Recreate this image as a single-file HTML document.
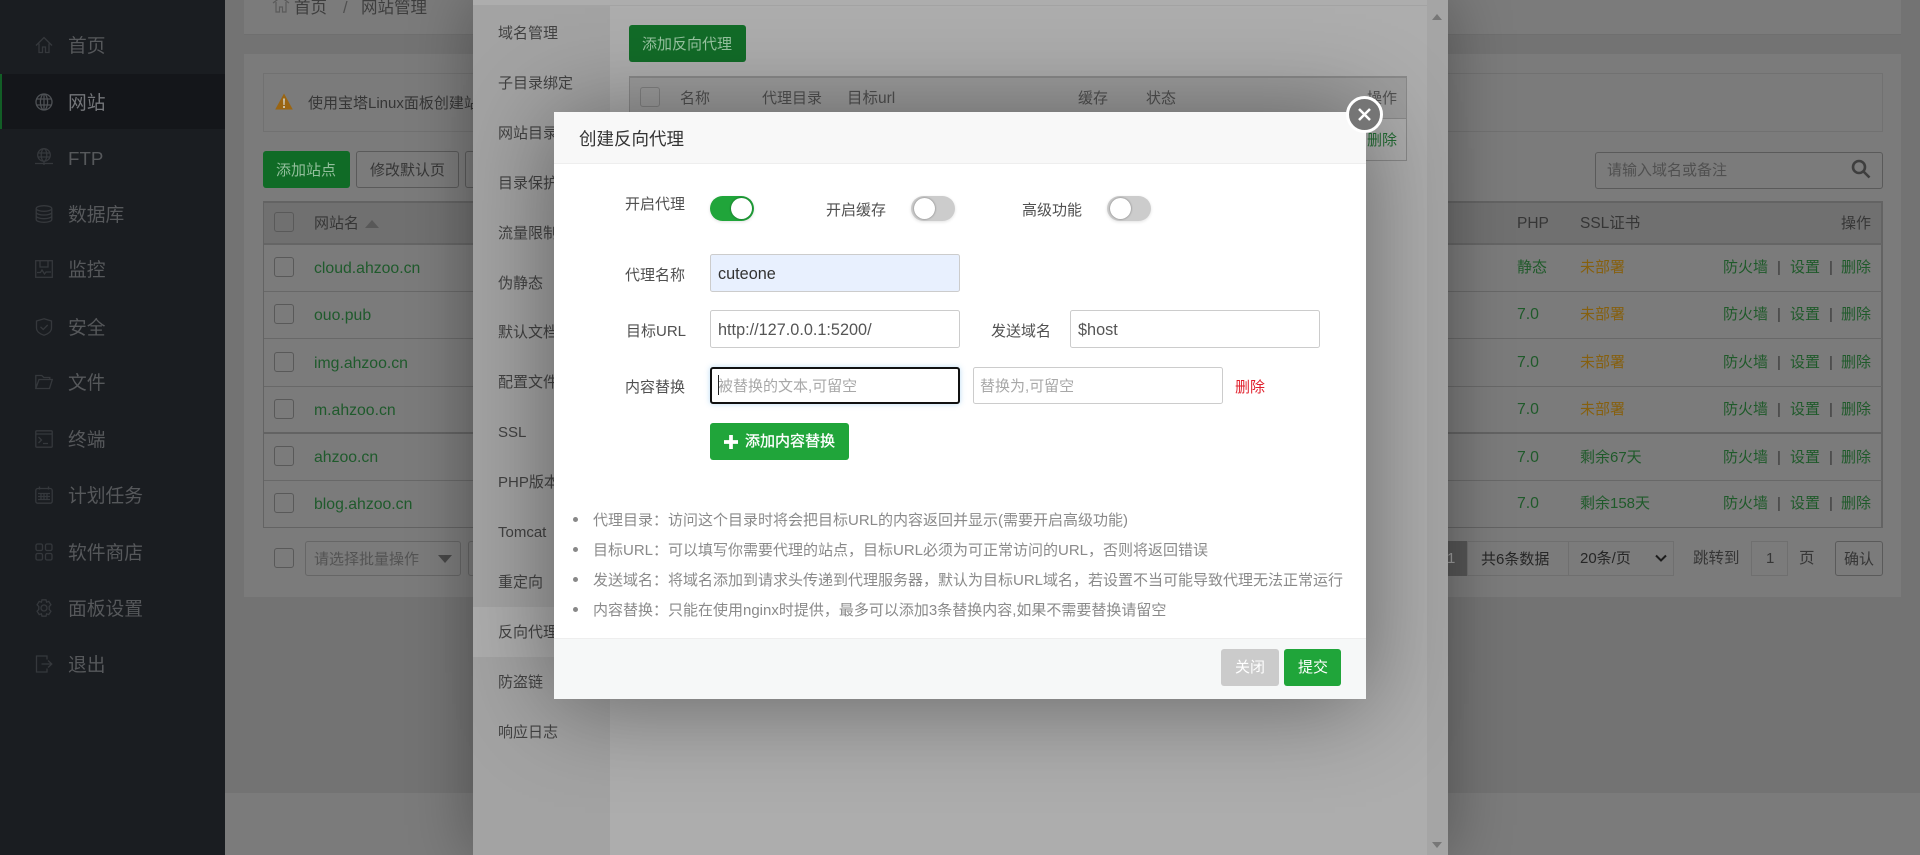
<!DOCTYPE html>
<html lang="zh-CN">
<head>
<meta charset="utf-8">
<title>网站管理</title>
<style>
html,body{margin:0;padding:0;width:1920px;height:855px;overflow:hidden;background:#737373}
body{position:relative;font-family:"Liberation Sans","Noto Sans CJK SC",sans-serif;font-size:15px;color:#363636}
div,span,svg{box-sizing:border-box}
.a{position:absolute}
.t{position:absolute;white-space:nowrap;line-height:20px;height:20px;margin-top:1px}
.m{position:absolute;left:68px;font-size:18.75px;line-height:24px;height:24px;color:#56585b;white-space:nowrap;margin-top:1px}
.i{position:absolute;left:35px;width:18px;height:18px;fill:none;stroke:#35383c;stroke-width:1.3}
.cb{position:absolute;width:20px;height:20px;border:1px solid #595959;border-radius:3px}
.n{color:#1f5a2c;font-size:15.8px}
.g{color:#1f5a2a}
.o{color:#86600f}
.tab{position:absolute;left:498px;color:#424242;white-space:nowrap;line-height:20px;margin-top:1px}
.lb{position:absolute;color:#505050;white-space:nowrap;line-height:20px;height:20px;margin-top:1px}
.inp{position:absolute;height:38px;border:1px solid #ccc;border-radius:2.5px;background:#fff;color:#555;font-size:16.25px;line-height:38px;padding-left:7px;white-space:nowrap}
.tip{position:absolute;left:593px;color:#8a8a8a;line-height:20px;height:20px;white-space:nowrap;margin-top:1px}
.dot{position:absolute;left:573px;width:5px;height:5px;border-radius:50%;background:#888}
.tog{position:absolute;width:44px;height:25px;border-radius:13px;background:#ccc;box-shadow:0 1px 3px rgba(0,0,0,.12)}
.tog i{position:absolute;top:2px;left:3px;width:21px;height:21px;border-radius:50%;background:#fff;box-shadow:0 0 2px rgba(0,0,0,.45)}
</style>
</head>
<body>

<!-- sidebar -->
<div class="a" style="left:0;top:0;width:225px;height:855px;background:#1a1d21"></div>
<div class="a" style="left:0;top:74px;width:225px;height:55px;background:#14161a"></div>
<div class="a" style="left:0;top:74px;width:2px;height:55px;background:#125e26"></div>

<svg class="i" style="top:36px" viewBox="0 0 18 18"><path d="M1 9.500 9 1.500l8 8M4 7.500V16.500h3.500V11h3v5.500H14V7.500"/></svg>
<div class="m" style="top:33px">首页</div>
<svg class="i" style="top:93px;stroke:#4e5155" viewBox="0 0 18 18"><circle cx="9" cy="9" r="8"/><ellipse cx="9" cy="9" rx="3.600" ry="8"/><path d="M1 6h16M1 12h16M9 1v16"/></svg>
<div class="m" style="top:90px;color:#74767a">网站</div>
<svg class="i" style="top:148px" viewBox="0 0 18 18"><circle cx="9" cy="7" r="6.300"/><ellipse cx="9" cy="7" rx="2.800" ry="6.300"/><path d="M2.700 5h12.600M2.700 9h12.600M0 15.500h18M9 13v4"/></svg>
<div class="t" style="left:68px;top:146px;height:24px;line-height:24px;font-size:18.75px;color:#56585b">FTP</div>
<svg class="i" style="top:205px" viewBox="0 0 18 18"><ellipse cx="9" cy="3.500" rx="7.800" ry="2.800"/><path d="M1.200 3.500v11c0 1.600 3.500 2.800 7.800 2.800s7.800-1.200 7.800-2.800v-11M1.200 7.200c0 1.600 3.500 2.800 7.800 2.800s7.800-1.200 7.800-2.800M1.200 10.900c0 1.600 3.500 2.800 7.800 2.800s7.800-1.200 7.800-2.800"/></svg>
<div class="m" style="top:202px">数据库</div>
<svg class="i" style="top:260px" viewBox="0 0 18 18"><rect x=".7" y=".7" width="16.600" height="16.600"/><path d="M5 1v6h8V1M2 12.500h3.500l1.500-2.500 2.500 4 1.500-2h5"/></svg>
<div class="m" style="top:257px">监控</div>
<svg class="i" style="top:318px" viewBox="0 0 18 18"><path d="M9 .8 16.500 3v7c0 3.500-3.500 6-7.500 7.200C5 16 1.500 13.500 1.500 10V3z"/><path d="m5.500 8.800 2.700 2.700 4.500-4.500"/></svg>
<div class="m" style="top:315px">安全</div>
<svg class="i" style="top:373px" viewBox="0 0 18 18"><path d="M.8 15.500V2.500h6l2 2h6v2M.8 15.500h13.700l2.800-9H4z"/></svg>
<div class="m" style="top:370px">文件</div>
<svg class="i" style="top:430px" viewBox="0 0 18 18"><rect x=".8" y=".8" width="16.400" height="16.400" rx="1"/><path d="M1 4h16M3.500 7l3 3-3 3M8 13.500h5"/></svg>
<div class="m" style="top:427px">终端</div>
<svg class="i" style="top:486px" viewBox="0 0 18 18"><rect x=".8" y="2.500" width="16.400" height="14.700" rx="2"/><path d="M4.500.5v3M13.500.5v3M3 7.500h12M3 10.500h12M3 13.500h12M6 7.500v6M9 7.500v6M12 7.500v6"/></svg>
<div class="m" style="top:483px">计划任务</div>
<svg class="i" style="top:543px" viewBox="0 0 18 18"><rect x="1" y="1" width="6.500" height="6.500" rx="1.500"/><rect x="10.500" y="1" width="6.500" height="6.500" rx="1.500"/><rect x="1" y="10.500" width="6.500" height="6.500" rx="1.500"/><rect x="10.500" y="10.500" width="6.500" height="6.500" rx="1.500"/></svg>
<div class="m" style="top:540px">软件商店</div>
<svg class="i" style="top:599px" viewBox="0 0 18 18"><path d="M7 .8h4l.6 2.400 2.200-.8 2.100 3.400-1.700 1.700v3l1.700 1.700-2.100 3.400-2.200-.8-.6 2.400H7l-.6-2.400-2.200.8-2.100-3.400 1.700-1.700v-3L2.100 5.800l2.100-3.400 2.200.8z"/><circle cx="9" cy="9" r="3"/></svg>
<div class="m" style="top:596px">面板设置</div>
<svg class="i" style="top:655px" viewBox="0 0 18 18"><path d="M12 4.500V1H1.500v16H12v-3.500M6.500 9H16M13 5.500 16.800 9 13 12.500"/></svg>
<div class="m" style="top:652px">退出</div>

<!-- page -->
<div class="a" style="left:225px;top:793px;width:1695px;height:62px;background:#7b7b7b"></div>
<div class="a" style="left:244px;top:0;width:1657px;height:35px;background:#7b7b7b;border-bottom:1px solid #6f6f6f"></div>
<svg class="a" style="left:272px;top:0;width:18px;height:14px;fill:none;stroke:#5a5a5a;stroke-width:1.200" viewBox="0 0 18 14"><path d="M1 3 9-3l8 6M4 2v10h3.500V7h3v5H14V2"/></svg>
<div class="t" style="left:294px;top:-3px;font-size:16.500px;color:#3e3e3e">首页</div>
<div class="t" style="left:343px;top:-3px;font-size:16.500px;color:#505050">/</div>
<div class="t" style="left:361px;top:-3px;font-size:16.500px;color:#3e3e3e">网站管理</div>

<div class="a" style="left:244px;top:54px;width:1657px;height:543px;background:#7b7b7b"></div>

<div class="a" style="left:263px;top:73px;width:1620px;height:59px;border:1px solid #717171"></div>
<svg class="a" style="left:275px;top:93px;width:18px;height:17px" viewBox="0 0 18 17"><path d="M9 .5 17.800 16.500H.2z" fill="#9a6512"/><path d="M8 5.500h2l-.3 6.500H8.300zM8 13h2v2H8z" fill="#c8bfa8"/></svg>
<div class="t" style="left:308px;top:93px">使用宝塔Linux面板创建站点时会自动创建权限配置，统一使用www用户</div>

<div class="a" style="left:263px;top:151px;width:87px;height:37px;background:#106b26;border-radius:3px"></div>
<div class="t" style="left:276px;top:160px;color:#93bf9c">添加站点</div>
<div class="a" style="left:356px;top:151px;width:103px;height:37px;border:1px solid #5a5a5a;border-radius:3px"></div>
<div class="t" style="left:370px;top:160px">修改默认页</div>
<div class="a" style="left:465px;top:151px;width:60px;height:37px;border:1px solid #5a5a5a;border-radius:3px"></div>

<div class="a" style="left:1595px;top:152px;width:288px;height:37px;border:1px solid #5a5a5a;border-radius:3px"></div>
<div class="t" style="left:1607px;top:160px;color:#505050">请输入域名或备注</div>
<svg class="a" style="left:1851px;top:159px;width:20px;height:20px;fill:none;stroke:#3e3e3e;stroke-width:2.600" viewBox="0 0 20 20"><circle cx="8" cy="8" r="6"/><path d="m12.500 12.500 6 6"/></svg>

<!-- main table -->
<div class="a" style="left:263px;top:201px;width:1620px;height:327px;border:1px solid #636363;border-top-width:2px;border-right-width:2px"></div>
<div class="a" style="left:264px;top:203px;width:1617px;height:40px;background:#707070"></div>
<div class="a" style="left:264px;top:243px;width:1618px;height:2px;background:#656565"></div>
<div class="a" style="left:264px;top:291px;width:1618px;height:1px;background:#686868"></div>
<div class="a" style="left:264px;top:338px;width:1618px;height:1px;background:#686868"></div>
<div class="a" style="left:264px;top:386px;width:1618px;height:1px;background:#686868"></div>
<div class="a" style="left:264px;top:432px;width:1618px;height:2px;background:#636363"></div>
<div class="a" style="left:264px;top:480px;width:1618px;height:1px;background:#686868"></div>

<div class="cb" style="left:274px;top:212px"></div>
<div class="t" style="left:314px;top:213px">网站名</div>
<svg class="a" style="left:365px;top:220px;width:14px;height:8px" viewBox="0 0 14 8"><path d="M7 0 14 8H0z" fill="#585858"/></svg>
<div class="t" style="left:1517px;top:213px;font-size:15.500px">PHP</div>
<div class="t" style="left:1580px;top:213px;font-size:15.500px">SSL证书</div>
<div class="t" style="left:1841px;top:213px">操作</div>

<div class="cb" style="left:274px;top:257px"></div><div class="t n" style="left:314px;top:258px">cloud.ahzoo.cn</div>
<div class="cb" style="left:274px;top:304px"></div><div class="t n" style="left:314px;top:305px">ouo.pub</div>
<div class="cb" style="left:274px;top:352px"></div><div class="t n" style="left:314px;top:353px">img.ahzoo.cn</div>
<div class="cb" style="left:274px;top:399px"></div><div class="t n" style="left:314px;top:400px">m.ahzoo.cn</div>
<div class="cb" style="left:274px;top:446px"></div><div class="t n" style="left:314px;top:447px">ahzoo.cn</div>
<div class="cb" style="left:274px;top:493px"></div><div class="t n" style="left:314px;top:494px">blog.ahzoo.cn</div>

<div class="t g" style="left:1517px;top:257px">静态</div><div class="t o" style="left:1580px;top:257px">未部署</div>
<div class="t g" style="left:1517px;top:304px;font-size:15.800px">7.0</div><div class="t o" style="left:1580px;top:304px">未部署</div>
<div class="t g" style="left:1517px;top:352px;font-size:15.800px">7.0</div><div class="t o" style="left:1580px;top:352px">未部署</div>
<div class="t g" style="left:1517px;top:399px;font-size:15.800px">7.0</div><div class="t o" style="left:1580px;top:399px">未部署</div>
<div class="t g" style="left:1517px;top:447px;font-size:15.800px">7.0</div><div class="t g" style="left:1580px;top:447px">剩余67天</div>
<div class="t g" style="left:1517px;top:493px;font-size:15.800px">7.0</div><div class="t g" style="left:1580px;top:493px">剩余158天</div>

<div class="t g" style="left:1723px;top:257px">防火墙</div><div class="t" style="left:1777px;top:257px">|</div><div class="t g" style="left:1790px;top:257px">设置</div><div class="t" style="left:1829px;top:257px">|</div><div class="t g" style="left:1841px;top:257px">删除</div>
<div class="t g" style="left:1723px;top:304px">防火墙</div><div class="t" style="left:1777px;top:304px">|</div><div class="t g" style="left:1790px;top:304px">设置</div><div class="t" style="left:1829px;top:304px">|</div><div class="t g" style="left:1841px;top:304px">删除</div>
<div class="t g" style="left:1723px;top:352px">防火墙</div><div class="t" style="left:1777px;top:352px">|</div><div class="t g" style="left:1790px;top:352px">设置</div><div class="t" style="left:1829px;top:352px">|</div><div class="t g" style="left:1841px;top:352px">删除</div>
<div class="t g" style="left:1723px;top:399px">防火墙</div><div class="t" style="left:1777px;top:399px">|</div><div class="t g" style="left:1790px;top:399px">设置</div><div class="t" style="left:1829px;top:399px">|</div><div class="t g" style="left:1841px;top:399px">删除</div>
<div class="t g" style="left:1723px;top:447px">防火墙</div><div class="t" style="left:1777px;top:447px">|</div><div class="t g" style="left:1790px;top:447px">设置</div><div class="t" style="left:1829px;top:447px">|</div><div class="t g" style="left:1841px;top:447px">删除</div>
<div class="t g" style="left:1723px;top:493px">防火墙</div><div class="t" style="left:1777px;top:493px">|</div><div class="t g" style="left:1790px;top:493px">设置</div><div class="t" style="left:1829px;top:493px">|</div><div class="t g" style="left:1841px;top:493px">删除</div>

<!-- batch row -->
<div class="cb" style="left:274px;top:548px"></div>
<div class="a" style="left:305px;top:541px;width:156px;height:35px;border:1px solid #666;border-radius:3px"></div>
<div class="t" style="left:314px;top:549px;color:#535353">请选择批量操作</div>
<svg class="a" style="left:438px;top:555px;width:14px;height:8px" viewBox="0 0 14 8"><path d="M0 0h14L7 8z" fill="#474747"/></svg>
<div class="a" style="left:468px;top:541px;width:60px;height:35px;border:1px solid #666;border-radius:3px"></div>

<!-- pagination -->
<div class="a" style="left:1420px;top:541px;width:47px;height:35px;background:#565656"></div>
<div class="a" style="left:1467px;top:541px;width:207px;height:35px;border:1px solid #6f6f6f"></div>
<div class="a" style="left:1568px;top:541px;width:1px;height:35px;background:#6f6f6f"></div>
<div class="t" style="left:1481px;top:549px;color:#262626">共6条数据</div>
<div class="t" style="left:1580px;top:548px;color:#262626">20条/页</div>
<svg class="a" style="left:1655px;top:554px;width:12px;height:9px;fill:none;stroke:#1d1d1d;stroke-width:2" viewBox="0 0 12 9"><path d="m1 1.500 5 5 5-5"/></svg>
<div class="t" style="left:1693px;top:548px;font-size:15.500px">跳转到</div>
<div class="a" style="left:1751px;top:541px;width:37px;height:35px;border:1px solid #6f6f6f"></div>
<div class="t" style="left:1766px;top:548px">1</div>
<div class="t" style="left:1799px;top:548px;font-size:15.500px">页</div>
<div class="a" style="left:1835px;top:541px;width:48px;height:35px;border:1px solid #5a5a5a;border-radius:3px"></div>
<div class="t" style="left:1844px;top:549px">确认</div>

<!-- drawer -->
<div class="a" style="left:473px;top:0;width:975px;height:855px;background:#adadad;box-shadow:0 0 60px rgba(0,0,0,.32)"></div>
<div class="t" style="left:1447px;top:548px;color:#868686">1</div>
<div class="a" style="left:473px;top:6px;width:137px;height:849px;background:#a3a3a3"></div>
<div class="a" style="left:473px;top:5px;width:954px;height:1px;background:#a3a3a3"></div>
<div class="a" style="left:473px;top:607px;width:137px;height:50px;background:#adadad"></div>
<div class="a" style="left:1427px;top:0;width:21px;height:855px;background:#a5a5a5"></div>
<svg class="a" style="left:1432px;top:14px;width:10px;height:6px" viewBox="0 0 10 6"><path d="M5 0 10 6H0z" fill="#777"/></svg>
<svg class="a" style="left:1432px;top:842px;width:10px;height:6px" viewBox="0 0 10 6"><path d="M0 0h10L5 6z" fill="#777"/></svg>

<div class="tab" style="top:23px">域名管理</div>
<div class="tab" style="top:73px">子目录绑定</div>
<div class="tab" style="top:123px">网站目录</div>
<div class="tab" style="top:173px">目录保护</div>
<div class="tab" style="top:223px">流量限制</div>
<div class="tab" style="top:273px">伪静态</div>
<div class="tab" style="top:322px">默认文档</div>
<div class="tab" style="top:372px">配置文件</div>
<div class="tab" style="top:422px">SSL</div>
<div class="tab" style="top:472px">PHP版本</div>
<div class="tab" style="top:522px">Tomcat</div>
<div class="tab" style="top:572px">重定向</div>
<div class="tab" style="top:622px">反向代理</div>
<div class="tab" style="top:672px">防盗链</div>
<div class="tab" style="top:722px">响应日志</div>

<div class="a" style="left:629px;top:25px;width:117px;height:37px;background:#126c28;border-radius:3px"></div>
<div class="t" style="left:642px;top:34px;color:#98c4a1">添加反向代理</div>
<div class="a" style="left:629px;top:76px;width:778px;height:85px;border:1px solid #898989;border-top-width:2px"></div>
<div class="a" style="left:630px;top:78px;width:776px;height:40px;background:#9d9d9d"></div>
<div class="a" style="left:630px;top:118px;width:776px;height:1px;background:#898989"></div>
<div class="cb" style="left:640px;top:87px;border-color:#828282"></div>
<div class="t" style="left:680px;top:88px;color:#505050">名称</div>
<div class="t" style="left:762px;top:88px;color:#505050">代理目录</div>
<div class="t" style="left:847px;top:88px;color:#505050;font-size:15.500px">目标url</div>
<div class="t" style="left:1078px;top:88px;color:#505050">缓存</div>
<div class="t" style="left:1146px;top:88px;color:#505050">状态</div>
<div class="t" style="left:1367px;top:88px;color:#505050">操作</div>
<div class="t" style="left:1367px;top:130px;color:#236c34">删除</div>

<!-- modal -->
<div class="a" style="left:554px;top:112px;width:812px;height:587px;background:#fff;box-shadow:0 5px 90px rgba(0,0,0,.42)"></div>
<div class="a" style="left:554px;top:112px;width:812px;height:52px;background:#f8f8f8;border-bottom:1px solid #eee"></div>
<div class="t" style="left:579px;top:127px;font-size:17.500px;line-height:22px;height:22px;color:#333">创建反向代理</div>
<div class="a" style="left:1346px;top:96px;width:37px;height:37px;border-radius:50%;background:#757575;border:3px solid #fff"></div>
<svg class="a" style="left:1356px;top:106px;width:17px;height:17px;fill:none;stroke:#fff;stroke-width:2.500" viewBox="0 0 17 17"><path d="m3 3 11 11M14 3 3 14"/></svg>

<div class="lb" style="left:625px;top:194px">开启代理</div>
<div class="tog" style="left:710px;top:196px;background:#20a53a"><i style="left:21px"></i></div>
<div class="lb" style="left:826px;top:200px">开启缓存</div>
<div class="tog" style="left:911px;top:196px"><i></i></div>
<div class="lb" style="left:1022px;top:200px">高级功能</div>
<div class="tog" style="left:1107px;top:196px"><i></i></div>

<div class="lb" style="left:625px;top:265px">代理名称</div>
<div class="inp" style="left:710px;top:254px;width:250px;background:#e8f0fe;color:#333">cuteone</div>

<div class="lb" style="left:626px;top:321px">目标URL</div>
<div class="inp" style="left:710px;top:310px;width:250px">http://127.0.0.1:5200/</div>
<div class="lb" style="left:991px;top:321px">发送域名</div>
<div class="inp" style="left:1070px;top:310px;width:250px">$host</div>

<div class="lb" style="left:625px;top:377px">内容替换</div>
<div class="inp" style="left:710px;top:367px;width:250px;height:37px;border:2px solid #111;border-radius:3px;box-shadow:0 0 6px rgba(102,175,233,.45);padding-left:6px;font-size:15px;line-height:35px;color:#a8a8a8">被替换的文本,可留空</div>
<div class="a" style="left:718px;top:375px;width:1px;height:20px;background:#222"></div>
<div class="inp" style="left:973px;top:367px;width:250px;height:37px;font-size:15px;line-height:37px;color:#a8a8a8;padding-left:6px">替换为,可留空</div>
<div class="lb" style="left:1235px;top:377px;color:#e0202c">删除</div>

<div class="a" style="left:710px;top:423px;width:139px;height:37px;background:#20a53a;border-radius:3px"></div>
<svg class="a" style="left:724px;top:435px;width:14px;height:14px" viewBox="0 0 15 15"><path d="M5.500 0h4v5.500H15v4H9.500V15h-4V9.500H0v-4h5.500z" fill="#fff"/></svg>
<div class="t" style="left:745px;top:431px;color:#fff;-webkit-text-stroke:.3px #fff">添加内容替换</div>

<div class="dot" style="top:517px"></div>
<div class="tip" style="top:510px">代理目录：访问这个目录时将会把目标URL的内容返回并显示(需要开启高级功能)</div>
<div class="dot" style="top:547px"></div>
<div class="tip" style="top:540px">目标URL：可以填写你需要代理的站点，目标URL必须为可正常访问的URL，否则将返回错误</div>
<div class="dot" style="top:577px"></div>
<div class="tip" style="top:570px">发送域名：将域名添加到请求头传递到代理服务器，默认为目标URL域名，若设置不当可能导致代理无法正常运行</div>
<div class="dot" style="top:607px"></div>
<div class="tip" style="top:600px">内容替换：只能在使用nginx时提供，最多可以添加3条替换内容,如果不需要替换请留空</div>

<div class="a" style="left:554px;top:638px;width:812px;height:61px;background:#f6f8f8;border-top:1px solid #eee"></div>
<div class="a" style="left:1221px;top:649px;width:58px;height:37px;background:#cbcbcb;border-radius:3px"></div>
<div class="t" style="left:1235px;top:657px;color:#fff">关闭</div>
<div class="a" style="left:1284px;top:649px;width:57px;height:37px;background:#20a53a;border-radius:3px"></div>
<div class="t" style="left:1298px;top:657px;color:#fff">提交</div>

</body>
</html>
